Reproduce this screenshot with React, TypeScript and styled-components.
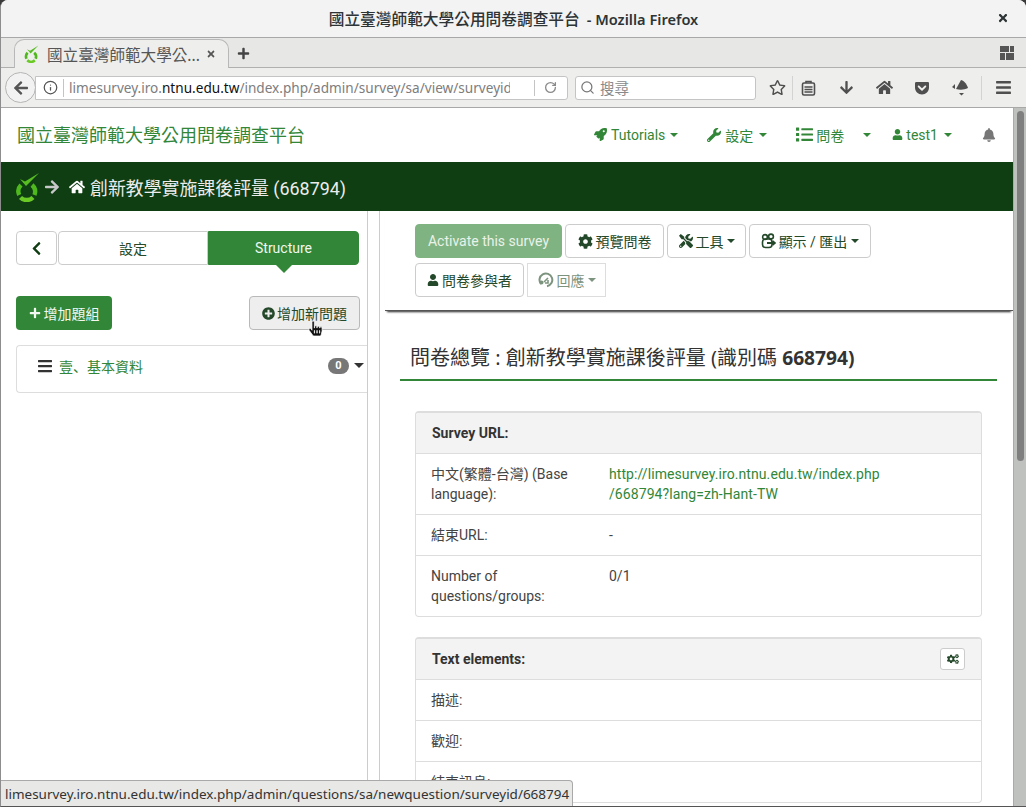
import React from "react";
import styled, { createGlobalStyle } from "styled-components";
import {
  FaRocket, FaWrench, FaList, FaUser, FaBell, FaHome, FaArrowRight, FaArrowLeft, FaArrowDown,
  FaChevronLeft, FaPlus, FaPlusCircle, FaBars, FaCog, FaCogs, FaTools, FaTimes, FaRegStar,
  FaGetPocket, FaHandPointer,
} from "react-icons/fa";
import { Info, RotateCw, Search } from "lucide-react";

const UI = `"Noto Sans", "Noto Sans CJK TC", sans-serif`;
const WEB = `Roboto, "Noto Sans CJK TC", sans-serif`;
const GREEN = "#328637";
const DARK = "#0f3e13";
const BTN = "#24492a";

const Global = createGlobalStyle`
  html, body { margin: 0; padding: 0; background: #3b3b3b; }
  #root { width: 1026px; height: 807px; overflow: hidden; }
  * { box-sizing: border-box; }
`;

const Win = styled.div`
  position: relative; width: 1026px; height: 807px; overflow: hidden;
  display: flex; flex-direction: column; background: #fff;
  border-radius: 8px 8px 0 0; border-left: 1px solid #8d8d8d; border-bottom: 1px solid #555;
`;
const TitleBar = styled.div`
  height: 38px; flex: none; background: #f3f3f3; border-bottom: 1px solid #a8a8a8;
  display: flex; align-items: center; justify-content: center; position: relative;
  font: 600 14.6px ${UI}; color: #2e3436;
`;
const TitleCjk = styled.span` font-size: 15.7px; font-weight: 500; margin-right: 7px; `;
const CloseBtn = styled.span`
  position: absolute; right: 17px; top: 12px; color: #2e3436; font-size: 12px; line-height: 12px;
`;
const TabBar = styled.div`
  height: 30px; flex: none; background: #e7e7e6; border-bottom: 1px solid #b0b0b0;
  display: flex; align-items: flex-end; padding-left: 13px; padding-right: 12px; color: #444;
`;
const Tab = styled.div`
  width: 215px; height: 29px; margin-bottom: -1px; background: #eeeeec; border: 1px solid #b8b8b8;
  border-bottom: none; border-radius: 10px 10px 0 0; display: flex; align-items: center;
  padding-left: 9px; font: 15.6px ${UI}; color: #555;
`;
const TabText = styled.span` margin-left: 8px; width: 146px; white-space: nowrap; `;
const TabClose = styled.span` margin-left: 13px; font-size: 10px; color: #555; display: flex; `;
const NewTab = styled.span` margin-left: 8px; margin-bottom: 7px; font-size: 13px; color: #444; display: flex; `;
const GridIcon = styled.svg` margin-left: auto; margin-bottom: 7px; `;
const NavBarF = styled.div`
  height: 40px; flex: none; background: #eeeeec; border-bottom: 1px solid #a8a8a8;
  display: flex; align-items: center; padding-left: 4px;
`;
const BackBtn = styled.div`
  width: 31px; height: 31px; border-radius: 50%; background: #f2f2f2; border: 1px solid #b5b5b5;
  display: flex; align-items: center; justify-content: center; color: #555; font-size: 16px;
  position: relative; z-index: 1; flex: none;
`;
const UrlField = styled.div`
  margin-left: -1px; width: 533px; height: 24px; flex: none; background: #fff; border: 1px solid #c4c4c4;
  border-radius: 0 3px 3px 0; display: flex; align-items: center; padding-left: 7px;
  font: 13.6px ${UI}; color: #7d7d7d; position: relative;
`;
const UrlSep = styled.span` width: 1px; height: 18px; background: #c4c4c4; margin: 0 5px 0 5px; flex: none; `;
const UrlText = styled.span` width: 441px; overflow: hidden; white-space: nowrap; flex: none; `;
const UrlHost = styled.b` font-weight: 400; color: #111; `;
const UrlReload = styled.span` margin-left: 24px; display: flex; align-items: center; color: #8a8a8a; gap: 9px; `;
const UrlReloadSep = styled.span` width: 1px; height: 16px; background: #c4c4c4; flex: none; `;
const SearchField = styled.div`
  margin-left: 7px; width: 181px; height: 24px; flex: none; background: #fff; border: 1px solid #c4c4c4;
  border-radius: 3px; display: flex; align-items: center; gap: 5px; padding-left: 4px;
  font: 14.5px ${UI}; color: #8a8a8a;
`;
const FfIcons = styled.div`
  display: flex; align-items: center; color: #4f4f4f; flex: 1; height: 100%; padding-left: 6px;
`;
const FfIcon = styled.span<{ $w: number }>`
  width: ${(p) => p.$w}px; display: flex; justify-content: center; align-items: center; flex: none; font-size: 16px;
`;
const FfSep = styled.span` width: 1px; height: 24px; background: #d3d3d3; flex: none; `;

const Viewport = styled.div` flex: 1; display: flex; min-height: 0; `;
const Page = styled.div` flex: 1; min-width: 0; display: flex; flex-direction: column; font: 14px ${WEB}; color: #444; `;
const ScrollTrack = styled.div`
  width: 13px; flex: none; background: #bfc1bf; padding: 3px 2px 0 3px; border-left: 1px solid #aaa;
`;
const ScrollThumb = styled.div` width: 7px; height: 350px; background: #7f7f7f; border-radius: 4px; `;

const TopNav = styled.div`
  height: 54px; flex: none; display: flex; align-items: center; justify-content: space-between;
  padding: 0 17px 1px 16px; color: ${GREEN};
`;
const Brand = styled.div` font-size: 18px; margin-bottom: 2px; `;
const NavList = styled.div` display: flex; align-items: center; gap: 30px; `;
const NavItem = styled.span<{ $ml?: number; $gap?: number }>`
  display: flex; align-items: center; gap: ${(p) => p.$gap ?? 4}px; font-size: 14px; margin-left: ${(p) => p.$ml ?? 0}px;
`;
const Caret = styled.i<{ $ml?: number; $c?: string; $s?: number }>`
  display: inline-block; width: 0; height: 0; border-left: ${(p) => p.$s ?? 4}px solid transparent; border-right: ${(p) => p.$s ?? 4}px solid transparent;
  border-top: ${(p) => p.$s ?? 4}px solid ${(p) => p.$c || "currentColor"}; margin-left: ${(p) => p.$ml ?? 2}px;
`;
const BellWrap = styled.span` color: #777; display: flex; font-size: 14px; `;
const Breadcrumb = styled.div`
  height: 49px; flex: none; background: ${DARK}; display: flex; align-items: center; padding-left: 14px;
  color: #ececec; font-size: 17.9px;
`;
const CrumbArrow = styled.span` color: #c8c8c8; display: flex; margin: 0 9px 0 4px; font-size: 16px; `;
const CrumbHome = styled.span` color: #fff; display: flex; margin-right: 5px; font-size: 16px; `;

const Body = styled.div` flex: 1; min-height: 0; display: flex; `;
const Sidebar = styled.aside` width: 367px; flex: none; border-right: 1px solid #ccc; padding: 20px 0 0 15px; `;
const TabRow = styled.div` display: flex; width: 343px; height: 34px; `;
const SideBack = styled.div`
  width: 41px; margin-right: 1px; background: #fff; border: 1px solid #ccc; border-radius: 4px;
  display: flex; align-items: center; justify-content: center; color: ${DARK}; font-size: 15px;
`;
const SideTab = styled.div<{ $on?: boolean }>`
  width: ${(p) => (p.$on ? 151 : 150)}px; position: relative; display: flex; align-items: center; justify-content: center;
  background: ${(p) => (p.$on ? GREEN : "#fff")}; color: ${(p) => (p.$on ? "#f0f6f0" : BTN)};
  border: 1px solid ${(p) => (p.$on ? GREEN : "#ccc")};
  border-radius: ${(p) => (p.$on ? "0 4px 4px 0" : "4px 0 0 4px")};
  &::after {
    content: ""; display: ${(p) => (p.$on ? "block" : "none")}; position: absolute; left: 50%; bottom: -9px;
    margin-left: -8px; border-left: 8px solid transparent; border-right: 8px solid transparent;
    border-top: 8px solid ${GREEN};
  }
`;
const SideActions = styled.div` display: flex; justify-content: space-between; width: 344px; margin-top: 31px; `;
const AddGroup = styled.div`
  width: 96px; height: 34px; background: ${GREEN}; border-radius: 4px; color: #f2f7f2; display: flex;
  align-items: center; justify-content: center; gap: 3px; font-size: 14px;
`;
const AddQuestion = styled.div`
  width: 111px; height: 34px; background: #eee; border: 1px solid #b9b9b9; border-radius: 4px; color: ${BTN};
  display: flex; align-items: center; justify-content: center; gap: 2px; font-size: 14px;
`;
const GroupList = styled.div`
  margin-top: 15px; height: 48px; border: 1px solid #ddd; border-right: none; border-radius: 4px 0 0 4px;
  display: flex; align-items: center; padding: 0 3px 7px 20px; color: #333;
`;
const GroupName = styled.span`
  color: ${GREEN}; margin-left: 6px; flex: 1; font-family: Roboto, "Noto Sans CJK SC", sans-serif;
`;
const Badge = styled.span`
  width: 21px; height: 16px; border-radius: 8px; background: #777; color: #fff; font-size: 11px; font-weight: 700;
  display: flex; align-items: center; justify-content: center; margin-right: 5px;
`;
const Gutter = styled.div` width: 12px; flex: none; border-right: 1px solid #ccc; `;

const Main = styled.main` flex: 1; min-width: 0; `;
const Toolbar = styled.div`
  margin-left: 5px; height: 100px; padding: 13px 0 0 30px; box-shadow: 0 3px 2px -2px rgba(0,0,0,.85); border-bottom: 1px solid #555;
`;
const ToolWrap = styled.div` display: flex; flex-wrap: wrap; gap: 5px 3px; width: 470px; `;
const ToolBtn = styled.div<{ $w: number; $primary?: boolean; $off?: boolean }>`
  width: ${(p) => p.$w}px; height: 34px; border-radius: ${(p) => (p.$off ? 0 : 4)}px; display: flex; align-items: center;
  justify-content: center; gap: 3px; font-size: 14px; white-space: nowrap;
  background: ${(p) => (p.$primary ? "#7fb382" : "#fff")};
  color: ${(p) => (p.$primary ? "#e9f2e9" : p.$off ? "#7c937e" : BTN)};
  border: 1px solid ${(p) => (p.$primary ? "#7fb382" : p.$off ? "#ddd" : "#ccc")};
`;
const Heading = styled.h3`
  margin: 33px 16px 0 20px; padding: 0 0 7px 10px; border-bottom: 2px solid ${GREEN};
  font: 400 20px/28px "Noto Sans", "Noto Sans CJK TC", sans-serif; color: #333;
  & b { font-weight: 700; font-size: 19.2px; }
`;
const Card = styled.section`
  width: 567px; margin: 30px 0 0 35px; border: 1px solid #ddd; border-top-width: 2px; border-radius: 4px;
  & + & { margin-top: 20px; }
`;
const CardHead = styled.div`
  height: 40px; background: #f3f3f3; display: flex; align-items: center; justify-content: space-between;
  padding: 0 16px 0 16px; font-weight: 700; color: #333; border-radius: 3px 3px 0 0;
`;
const GearBtn = styled.span`
  width: 25px; height: 22px; background: #fff; border: 1px solid #ccc; border-radius: 3px; color: ${BTN};
  display: flex; align-items: center; justify-content: center; font-size: 12px;
`;
const Row = styled.div`
  display: grid; grid-template-columns: 178px 1fr; padding: 10px 15px; border-top: 1px solid #ddd; line-height: 20px; color: #444;
`;
const Link = styled.span` color: ${GREEN}; letter-spacing: 0.08px; `;
const StatusBar = styled.div`
  position: absolute; left: -1px; bottom: 0; height: 26px; width: 573px; padding-left: 5px; background: #e8e8e6;
  border: 1px solid #a9a9a9; border-radius: 0 4px 0 0; border-left: none; border-bottom: none;
  display: flex; align-items: center; font: 13.47px ${UI}; color: #333; white-space: nowrap;
`;
const Cursor = styled.span`
  position: absolute; left: 307px; top: 321px; color: #111; font-size: 15px; display: flex;
  & svg { stroke: #fff; stroke-width: 24px; }
`;

const Logo = ({ s }: { s: number }) => (
  <svg width={s} height={s * 1.2} viewBox="0 0 25 30">
    <path d="M6 13 A9 9 0 0 0 4.2 23" fill="none" stroke="#4fb81c" strokeWidth="4.4" />
    <path d="M5.5 25.5 A9 9 0 0 0 18 25.5" fill="none" stroke="#6bc926" strokeWidth="4.4" />
    <path d="M19.5 23 A9 9 0 0 0 17 13" fill="none" stroke="#4fb81c" strokeWidth="4.4" />
    <path d="M5 7 L10 9.5 L24 1 L11 14 L5 7Z" fill="#58bd22" />
  </svg>
);

const Clip = () => (
  <svg width="15" height="16" viewBox="0 0 15 16" fill="none" stroke="currentColor" strokeWidth="1.6">
    <rect x="1.5" y="3" width="12" height="12" rx="1.5" />
    <path d="M5 3V1.5h5V3" />
    <path d="M3.5 7h8M3.5 9.5h8M3.5 12h8" />
  </svg>
);
const Gopher = () => (
  <svg width="17" height="16" viewBox="0 0 17 16" fill="currentColor">
    <path d="M4 9 L9 0 C13 1 15 5 16 8 C12 10 8 10 4 9Z" />
    <path d="M0 7 L3 4 L3 9Z M7 13 h5 l-2.5 2.5Z" />
  </svg>
);
const ExportIcon = () => (
  <svg width="15" height="16" viewBox="0 0 15 16" fill="none" stroke="currentColor" strokeWidth="1.6">
    <circle cx="4" cy="4" r="2.4" /><circle cx="10" cy="3.5" r="2.4" />
    <rect x="1.5" y="6" width="9.5" height="8.5" rx="3" />
    <path d="M6 10h8M11.5 8l2.5 2-2.5 2" strokeWidth="1.8" />
  </svg>
);
const ResponseIcon = () => (
  <svg width="16" height="16" viewBox="0 0 16 16" fill="none" stroke="currentColor" strokeWidth="2">
    <path d="M3 12 A6.4 6.4 0 1 1 9 14.2" />
    <path d="M6 10 L10 6 M7 11h3v-3" strokeWidth="1.6" />
    <circle cx="3.5" cy="10.5" r="2" fill="currentColor" stroke="none" />
  </svg>
);

export default function App() {
  return (
    <>
      <Global />
      <Win>
        <TitleBar>
          <TitleCjk>國立臺灣師範大學公用問卷調查平台</TitleCjk>- Mozilla Firefox
          <CloseBtn><FaTimes /></CloseBtn>
        </TitleBar>
        <TabBar>
          <Tab>
            <Logo s={15} />
            <TabText>國立臺灣師範大學公...</TabText>
            <TabClose><FaTimes /></TabClose>
          </Tab>
          <NewTab><FaPlus /></NewTab>
          <GridIcon width="14" height="14" viewBox="0 0 14 14" fill="#555">
            <rect x="0" y="0" width="9" height="6" /><rect x="10" y="0" width="4" height="6" />
            <rect x="0" y="7" width="5" height="7" /><rect x="6" y="7" width="8" height="7" />
          </GridIcon>
        </TabBar>
        <NavBarF>
          <BackBtn><FaArrowLeft /></BackBtn>
          <UrlField>
            <Info size={15} color="#555" />
            <UrlSep />
            <UrlText>limesurvey.iro.<UrlHost>ntnu.edu.tw</UrlHost>/index.php/admin/survey/sa/view/surveyid/</UrlText>
            <UrlReload><UrlReloadSep /><RotateCw size={13} strokeWidth={2.4} /></UrlReload>
          </UrlField>
          <SearchField><Search size={15} color="#777" />搜尋</SearchField>
          <FfIcons>
            <FfIcon $w={30}><FaRegStar size={17} /></FfIcon>
            <FfSep />
            <FfIcon $w={30}><Clip /></FfIcon>
            <FfIcon $w={46}><FaArrowDown size={15} /></FfIcon>
            <FfIcon $w={30}><FaHome size={17} /></FfIcon>
            <FfIcon $w={46}><FaGetPocket size={16} /></FfIcon>
            <FfIcon $w={30}><Gopher /></FfIcon>
            <FfIcon $w={6} />
            <FfSep />
            <FfIcon $w={42}><FaBars size={17} /></FfIcon>
          </FfIcons>
        </NavBarF>
        <Viewport>
          <Page>
            <TopNav>
              <Brand>國立臺灣師範大學公用問卷調查平台</Brand>
              <NavList>
                <NavItem><FaRocket size={13} />Tutorials<Caret $ml={1} /></NavItem>
                <NavItem $ml={-1}><FaWrench size={14} />設定<Caret $ml={2} /></NavItem>
                <NavItem $ml={-1} $gap={3}><FaList size={17} />問卷<Caret $ml={16} /></NavItem>
                <NavItem $ml={-9} $gap={3}><FaUser size={11} />test1<Caret $ml={3} /></NavItem>
                <BellWrap><FaBell /></BellWrap>
              </NavList>
            </TopNav>
            <Breadcrumb>
              <Logo s={25} />
              <CrumbArrow><FaArrowRight /></CrumbArrow>
              <CrumbHome><FaHome /></CrumbHome>
              創新教學實施課後評量 (668794)
            </Breadcrumb>
            <Body>
              <Sidebar>
                <TabRow>
                  <SideBack><FaChevronLeft /></SideBack>
                  <SideTab>設定</SideTab>
                  <SideTab $on>Structure</SideTab>
                </TabRow>
                <SideActions>
                  <AddGroup><FaPlus size={12} />增加題組</AddGroup>
                  <AddQuestion><FaPlusCircle size={13} />增加新問題</AddQuestion>
                </SideActions>
                <GroupList>
                  <FaBars size={16} />
                  <GroupName>壹、基本資料</GroupName>
                  <Badge>0</Badge>
                  <Caret $ml={0} $c="#333" $s={5} />
                </GroupList>
              </Sidebar>
              <Gutter />
              <Main>
                <Toolbar>
                  <ToolWrap>
                    <ToolBtn $w={147} $primary>Activate this survey</ToolBtn>
                    <ToolBtn $w={99}><FaCog size={15} />預覽問卷</ToolBtn>
                    <ToolBtn $w={79}><FaTools size={14} />工具<Caret $ml={0} /></ToolBtn>
                    <ToolBtn $w={122}><ExportIcon />顯示 / 匯出<Caret $ml={1} /></ToolBtn>
                    <ToolBtn $w={109}><FaUser size={12} />問卷參與者</ToolBtn>
                    <ToolBtn $w={79} $off><ResponseIcon />回應<Caret $ml={0} /></ToolBtn>
                  </ToolWrap>
                </Toolbar>
                <Heading>問卷總覽 : 創新教學實施課後評量 (識別碼 <b>668794)</b></Heading>
                <Card>
                  <CardHead>Survey URL:</CardHead>
                  <Row>
                    <span>中文(繁體-台灣) (Base language):</span>
                    <Link>http://limesurvey.iro.ntnu.edu.tw/index.php<br />/668794?lang=zh-Hant-TW</Link>
                  </Row>
                  <Row><span>結束URL:</span><span>-</span></Row>
                  <Row><span>Number of questions/groups:</span><span>0/1</span></Row>
                </Card>
                <Card>
                  <CardHead>Text elements:<GearBtn><FaCogs /></GearBtn></CardHead>
                  <Row><span>描述:</span><span /></Row>
                  <Row><span>歡迎:</span><span /></Row>
                  <Row><span>結束訊息:</span><span /></Row>
                </Card>
              </Main>
            </Body>
          </Page>
          <ScrollTrack><ScrollThumb /></ScrollTrack>
        </Viewport>
        <Cursor><FaHandPointer /></Cursor>
        <StatusBar>limesurvey.iro.ntnu.edu.tw/index.php/admin/questions/sa/newquestion/surveyid/668794</StatusBar>
      </Win>
    </>
  );
}
